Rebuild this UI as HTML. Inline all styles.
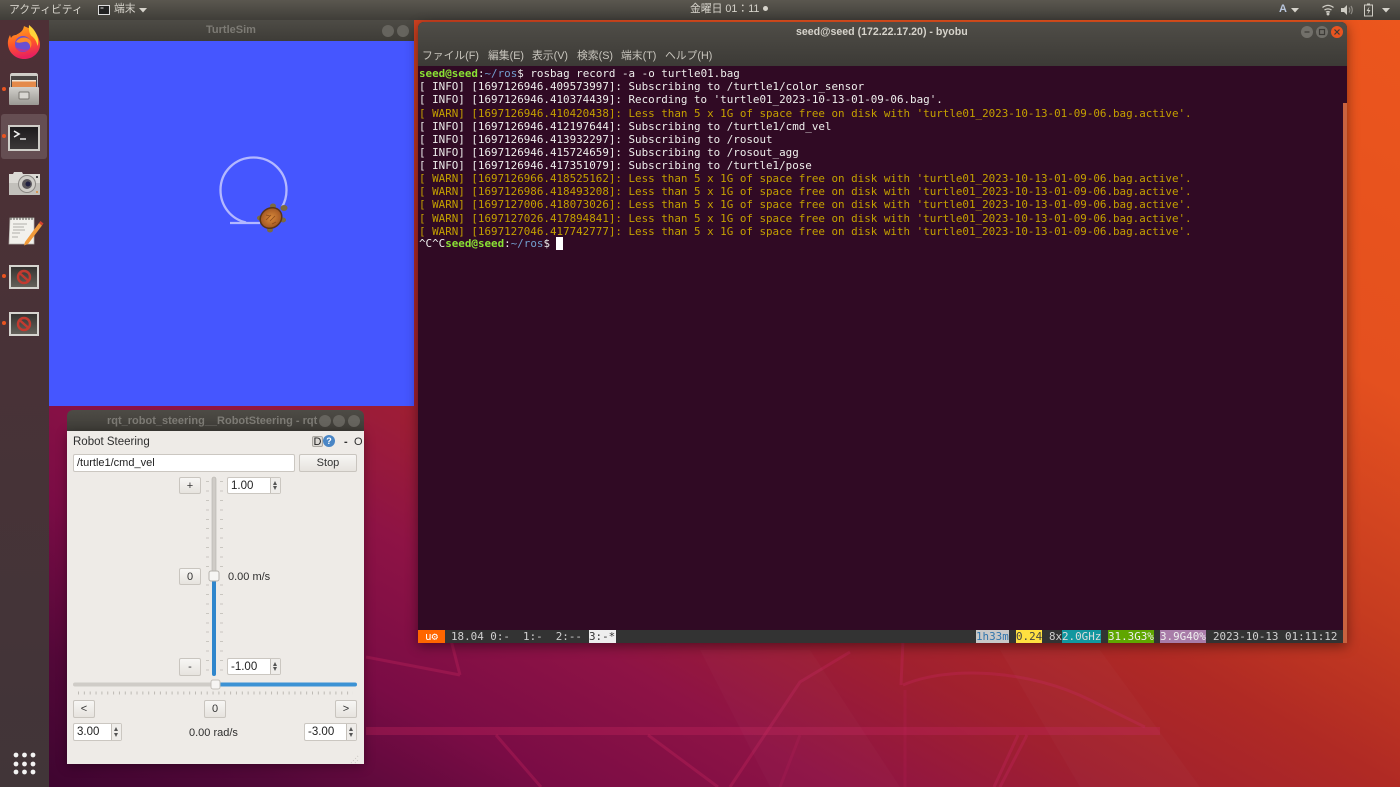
<!DOCTYPE html>
<html lang="ja"><head><meta charset="utf-8"><title>Ubuntu desktop</title>
<style>
*{box-sizing:border-box}
html,body{margin:0;padding:0;width:1400px;height:787px;overflow:hidden;background:#300a24}
body{font-family:"Liberation Sans","Noto Sans CJK JP",sans-serif}
#root{position:absolute;left:0;top:0;width:1400px;height:787px;overflow:hidden;filter:blur(.3px)}
.a{position:absolute}
.t{position:absolute;white-space:pre;line-height:1}
#bg{position:absolute;left:0;top:0;width:1400px;height:787px;background:linear-gradient(to top right,#3a042e 0%,#520838 10%,#7a0c45 20%,#8e1345 30%,#a0202f 40%,#b02a24 50%,#c63c20 60%,#e4501f 75%,#ec561d 100%)}
#top{position:absolute;left:0;top:0;width:1400px;height:20px;background:linear-gradient(#5a574f,#3f3d38);color:#d6d3cb;font-size:11px}
#dock{position:absolute;left:0;top:20px;width:49px;height:767px;background:linear-gradient(#4e3036,#413538)}
.dot{position:absolute;left:2px;width:4px;height:4px;border-radius:50%;background:#e95420}
.tb{background:linear-gradient(#4d4b45,#3e3c37)}
.wb{position:absolute;border-radius:50%;width:12px;height:12px;background:#66645e}
pre{margin:0;font-family:"DejaVu Sans Mono","Liberation Mono",monospace}
#term{position:absolute;left:419px;top:67px;font-size:10.88px;line-height:13.08px;color:#eeeeec;white-space:pre}
#term i{font-style:normal;position:relative;top:1px}
.w{color:#c4a000}.g{color:#8ae234;font-weight:bold}.b{color:#729fcf}
.st{position:absolute;top:630px;height:13px;font:10.88px/13px "DejaVu Sans Mono","Liberation Mono",monospace;white-space:pre}
.btn{position:absolute;background:linear-gradient(#f7f6f4,#e6e3de);border:1px solid #c9c5bf;border-radius:2px;color:#333;font-size:11px;text-align:center;line-height:16px}
.inp{position:absolute;background:#fff;border:1px solid #cbc7c1;border-radius:2px;color:#222;font-size:11.5px;line-height:16px;padding-left:3px}
.sp{position:absolute;top:0;right:0;bottom:0;width:10px;background:#efedea;border-left:1px solid #c4c0ba}
.sp:before{content:"";position:absolute;left:2px;top:3px;border:2.5px solid transparent;border-top:0;border-bottom:4px solid #555}
.sp:after{content:"";position:absolute;left:2px;bottom:3px;border:2.5px solid transparent;border-bottom:0;border-top:4px solid #555}
.lb{position:absolute;color:#2e2e2e;font-size:11px;white-space:pre;line-height:12px}
.mn{position:absolute;white-space:pre;line-height:1;top:51px;font-size:10.8px;color:#c8c5bd}
</style></head><body><div id="root">
<div id="bg"></div>
<svg class="a" style="left:0;top:0" width="1400" height="787" fill="none">
<g stroke="#c4245c" stroke-opacity=".35" stroke-width="3">
<path d="M903 640l-2 45M903 685C950 665 1030 670 1090 700L1145 727"/>
<path d="M451 640l9 35M366 657l94 18"/>
<path d="M496 735l45 52M648 735l70 52M1018 735l-24 52M1027 735L1000 787M730 787l70-105 50-30"/>
<path d="M800 735l-20 52M905 690l0 97" stroke-opacity=".18"/>
</g>
<path d="M366 727H1160V735H366Z" fill="#c4245c" fill-opacity=".35"/>
<path d="M370 410l30 0 0 60-30 0Z" fill="#a01a45" fill-opacity=".25"/>
<path d="M700 650L770 787H900L810 650ZM1000 650L1080 787H1200L1100 650Z" fill="#fff" fill-opacity=".02"/>
</svg>

<!-- top bar -->
<div id="top">
<div class="t" style="left:9px;top:5px;font-size:10.8px">アクティビティ</div>
<svg class="a" style="left:98px;top:5px" width="12" height="10"><rect x=".5" y=".5" width="11" height="9" fill="#222" stroke="#ddd"/><path d="M2.5 3h3" stroke="#ddd"/></svg>
<div class="t" style="left:114px;top:4px;font-size:10.8px">端末</div>
<svg class="a" style="left:139px;top:8px" width="8" height="5"><path d="M0 0h8L4 4.500Z" fill="#d6d3cb"/></svg>
<div class="t" style="left:690px;top:4px;font-size:10.8px">金曜日 01：11</div>
<div class="a" style="left:763px;top:6px;width:5px;height:5px;border-radius:50%;background:#d6d3cb"></div>
<div class="t" style="left:1279px;top:4px;font-size:11px;font-weight:bold;color:#b9c6dd">A</div>
<svg class="a" style="left:1291px;top:8px" width="8" height="5"><path d="M0 0h8L4 4.500Z" fill="#d6d3cb"/></svg>
<svg class="a" style="left:1322px;top:4px" width="12" height="12" fill="none" stroke="#cfccc4" stroke-width="1.300"><path d="M.5 3.500C4 .8 8 .8 11.500 3.500M2.500 6C4.500 4.500 7.500 4.500 9.500 6M4 8.200C5.200 7.400 6.800 7.400 8 8.200"/><circle cx="6" cy="10" r=".8" fill="#cfccc4"/></svg>
<svg class="a" style="left:1341px;top:4px" width="13" height="12" fill="none"><path d="M0 4h3l3-3v10L3 8H0Z" fill="#cfccc4"/><path d="M8 3.500C9 5 9 7 8 8.500M10 2c1.600 2.500 1.600 5.500 0 8" stroke="#8f8c85" stroke-width="1.200"/></svg>
<svg class="a" style="left:1364px;top:3px" width="10" height="14" fill="none"><rect x=".5" y="2" width="8" height="11" stroke="#cfccc4"/><rect x="3" y=".5" width="3" height="1.500" fill="#cfccc4"/><path d="M5.500 3.500L2.500 8h2l-1 3.500L6.500 7h-2Z" fill="#cfccc4"/></svg>
<svg class="a" style="left:1382px;top:8px" width="8" height="5"><path d="M0 0h8L4 4.500Z" fill="#d6d3cb"/></svg>
</div>

<!-- dock -->
<div id="dock"></div>
<div class="a" style="left:1px;top:114px;width:46px;height:45px;border-radius:3px;background:rgba(255,255,255,.14)"></div>
<div class="dot" style="top:87px"></div><div class="dot" style="top:134px"></div>
<div class="dot" style="top:274px"></div><div class="dot" style="top:321px"></div>
<svg class="a" style="left:0;top:20px" width="49" height="767">
<defs>
<linearGradient id="ff" x1="0" y1="0" x2=".2" y2="1"><stop offset="0" stop-color="#ffb01f"/><stop offset=".55" stop-color="#ff5a26"/><stop offset="1" stop-color="#e8205f"/></linearGradient>
<linearGradient id="sil" x1="0" y1="0" x2="0" y2="1"><stop offset="0" stop-color="#d2d0cb"/><stop offset="1" stop-color="#9a9893"/></linearGradient>
<linearGradient id="dk" x1="0" y1="0" x2="0" y2="1"><stop offset="0" stop-color="#1d1b1d"/><stop offset="1" stop-color="#3c3839"/></linearGradient>
<linearGradient id="no" x1="0" y1="0" x2="0" y2="1"><stop offset="0" stop-color="#353331"/><stop offset="1" stop-color="#636059"/></linearGradient>
<radialGradient id="shell"><stop offset="0" stop-color="#d98a3a"/><stop offset="1" stop-color="#a65a24"/></radialGradient>
</defs>
<!-- firefox -->
<path d="M24 6c3 2 9 2 13 9 4 7 4 13 0 18-4 5-9 6-13 6-7 0-15-5-16-14-.5-4 .5-7 2-10l1 3c1-2 3-3 5-3 3-2 7-3 8-9Z" fill="url(#ff)"/>
<path d="M29 5c4 3 8 8 9 14 .5 3 .2 5-.5 7-1-5-3-8-6-10-2-2-3-6-2.500-11Z" fill="#ffd53a"/>
<circle cx="23" cy="24" r="8" fill="#6a4fd0"/>
<path d="M16 22c3-5 10-6 14-2 2 2 2 6 0 8 .5-3-1-5-3-6-3-1-7 2-11 0Z" fill="#ff8a2a"/>
<path d="M15 27c3 5 10 6 15 2-3 1-8 1-15-2Z" fill="#b8359a"/>
<!-- files -->
<path d="M10 55c0-1 1-2 2-2h24c1 0 2 1 2 2v29c0 1-1 1-2 1H12c-1 0-2 0-2-1Z" fill="url(#sil)"/>
<rect x="11" y="56" width="26" height="11" fill="#4a4644"/>
<rect x="12" y="61" width="24" height="6" fill="#e48a4a"/><rect x="12" y="60" width="24" height="1.500" fill="#f2e7d6"/>
<rect x="9" y="67" width="30" height="18" rx="1" fill="url(#sil)"/>
<rect x="19" y="72" width="10" height="7" rx="1" fill="#d9d7d2" stroke="#77746f"/>
<!-- terminal -->
<rect x="8" y="105" width="32" height="26" fill="#cfcdc8"/><rect x="10" y="107" width="28" height="22" fill="url(#dk)"/>
<path d="M14 111l5 3-5 3" fill="none" stroke="#f2f2f2" stroke-width="1.600"/><path d="M20 119h6" stroke="#f2f2f2" stroke-width="1.400"/>
<!-- camera -->
<path d="M9 154h4l1-2h8l1 2h17v20a1 1 0 0 1-1 1H9Z" fill="#dbd9d4"/>
<path d="M9 163h31v11a1 1 0 0 1-1 1H9Z" fill="#c2c0bb"/>
<circle cx="27" cy="164" r="8.500" fill="#cfcdc8" stroke="#8a8783"/><circle cx="27" cy="164" r="5" fill="#5a575c"/><circle cx="28" cy="164" r="2.500" fill="#1f2040"/>
<circle cx="37" cy="172" r="1" fill="#e08a30"/><rect x="36" y="156" width="2" height="2" fill="#444"/>
<!-- note -->
<path d="M10 198h24v26H9Z" fill="#f2f1ec" stroke="#b8b6b0" stroke-width=".7"/>
<path d="M11 197v3M14 197v3M17 197v3M20 197v3M23 197v3M26 197v3M29 197v3M32 197v3" stroke="#55534f"/>
<path d="M13 204h14M13 207h11M13 210h12M12 213h8M12 217h6" stroke="#9a9894" stroke-width=".8"/>
<path d="M25 222L39 203l3 2.500L28 224l-4 1.500Z" fill="#f09a3a"/><path d="M39 203l1.500-2 3 2.500-1.500 2Z" fill="#d5402f"/>
<!-- disabled -->
<rect x="9" y="245" width="30" height="24" fill="#d6d4cf"/><rect x="11" y="247" width="26" height="20" fill="url(#no)"/>
<circle cx="24" cy="257" r="6" fill="none" stroke="#c23a30" stroke-width="2.400"/><path d="M19.500 253l9 8" stroke="#c23a30" stroke-width="2.400"/>
<rect x="9" y="292" width="30" height="24" fill="#d6d4cf"/><rect x="11" y="294" width="26" height="20" fill="url(#no)"/>
<circle cx="24" cy="304" r="6" fill="none" stroke="#c23a30" stroke-width="2.400"/><path d="M19.500 300l9 8" stroke="#c23a30" stroke-width="2.400"/>
<!-- grid -->
<g fill="#f3f3f3"><circle cx="16" cy="735" r="2.400"/><circle cx="24.500" cy="735" r="2.400"/><circle cx="33" cy="735" r="2.400"/><circle cx="16" cy="744" r="2.400"/><circle cx="24.500" cy="744" r="2.400"/><circle cx="33" cy="744" r="2.400"/><circle cx="16" cy="752" r="2.400"/><circle cx="24.500" cy="752" r="2.400"/><circle cx="33" cy="752" r="2.400"/></g>
</svg>

<!-- turtlesim -->
<div class="a tb" style="left:49px;top:20px;width:365px;height:21px"></div>
<div class="t" style="left:206px;top:25px;font-size:11px;font-weight:bold;color:#7d7b75">TurtleSim</div>
<div class="wb" style="left:382px;top:25px"></div><div class="wb" style="left:397px;top:25px"></div>
<div class="a" style="left:49px;top:41px;width:365px;height:365px;background:#4556ff"></div>
<svg class="a" style="left:200px;top:140px" width="100" height="100" fill="none">
<path d="M30 83H60M46 82.500C31 79 20.500 66 20.500 50C20.500 32 35 17.500 53.500 17.500C72 17.500 86.500 32 86.500 50C86.500 57 85 62 82 67" stroke="#b3b8ff" stroke-width="2.300"/>
<g fill="#7c6a3e"><ellipse cx="84" cy="68" rx="3.500" ry="3"/><ellipse cx="73" cy="66" rx="3" ry="2.500"/><ellipse cx="60" cy="78" rx="3" ry="2.500"/><ellipse cx="83" cy="80" rx="3" ry="2.500"/><ellipse cx="70" cy="90" rx="3" ry="2.500"/></g>
<ellipse cx="71" cy="78" rx="12" ry="10.500" fill="#5a3416" transform="rotate(-35 71 78)"/>
<ellipse cx="71" cy="78" rx="10.500" ry="9" fill="url(#shell)" transform="rotate(-35 71 78)"/>
<path d="M66 80l5-5M70 81l5-5M66 75l4 1M72 84l4-2" stroke="#8a4a1c" stroke-width=".8"/>
</svg>

<!-- rqt -->
<div class="a tb" style="left:67px;top:410px;width:297px;height:21px;border-radius:6px 6px 0 0"></div>
<div class="t" style="left:107px;top:415px;font-size:11px;font-weight:bold;color:#7d7b75;width:212px;overflow:hidden;padding-top:1px">rqt_robot_steering__RobotSteering - rqt</div>
<div class="wb" style="left:319px;top:415px"></div><div class="wb" style="left:333px;top:415px"></div><div class="wb" style="left:348px;top:415px"></div>
<div class="a" style="left:67px;top:431px;width:297px;height:333px;background:#eeebe7;box-shadow:0 2px 10px rgba(0,0,0,.35)"></div>
<div class="lb" style="left:73px;top:436px;font-size:11.500px">Robot Steering</div>
<div class="a" style="left:312px;top:436px;width:11px;height:11px;background:#dcd9d4;border:1px solid #aaa7a1;border-radius:2px;font-size:11px;line-height:10px;text-align:center;color:#222">D</div>
<div class="a" style="left:323px;top:435px;width:12px;height:12px;border-radius:50%;background:#4a86c5;color:#fff;font-size:9px;line-height:12px;text-align:center;font-weight:bold">?</div>
<div class="lb" style="left:344px;top:436px;font-weight:bold">-</div>
<div class="lb" style="left:354px;top:436px">O</div>
<div class="inp" style="left:73px;top:454px;width:222px;height:18px;font-size:11px">/turtle1/cmd_vel</div>
<div class="btn" style="left:299px;top:454px;width:58px;height:18px">Stop</div>

<div class="btn" style="left:179px;top:477px;width:22px;height:17px">+</div>
<div class="btn" style="left:179px;top:568px;width:22px;height:17px">0</div>
<div class="btn" style="left:179px;top:658px;width:22px;height:18px">-</div>
<div class="inp" style="left:227px;top:477px;width:54px;height:17px">1.00<div class="sp"></div></div>
<div class="inp" style="left:227px;top:658px;width:54px;height:17px">-1.00<div class="sp"></div></div>
<div class="lb" style="left:228px;top:571px">0.00 m/s</div>

<svg class="a" style="left:67px;top:470px" width="297" height="294" fill="none">
<path stroke="#c9c6c0" d="M139 11.500h3M153 11.500h3M139 21h3M153 21h3M139 30.500h3M153 30.500h3M139 40h3M153 40h3M139 49.500h3M153 49.500h3M139 58.500h3M153 58.500h3M139 68h3M153 68h3M139 77.500h3M153 77.500h3M139 87h3M153 87h3M139 96.500h3M153 96.500h3M139 115h3M153 115h3M139 124.500h3M153 124.500h3M139 134h3M153 134h3M139 143.500h3M153 143.500h3M139 153h3M153 153h3M139 162h3M153 162h3M139 171.500h3M153 171.500h3M139 181h3M153 181h3M139 190.500h3M153 190.500h3M139 200h3M153 200h3"/>
<rect x="145" y="7" width="4" height="100" rx="2" fill="#cfccc7" stroke="#b5b2ac" stroke-width=".6"/>
<rect x="145" y="106" width="4" height="100" rx="2" fill="#2f86cc"/>
<rect x="6" y="212.500" width="142" height="4" rx="2" fill="#cfccc7"/>
<rect x="148" y="212.500" width="142" height="4" rx="2" fill="#3c92d4"/>
<rect x="142" y="101" width="10" height="10" rx="2" fill="#f6f5f3" stroke="#b5b2ac"/>
<rect x="144" y="210" width="9" height="9" rx="2" fill="#f6f5f3" stroke="#c4c1bb"/>
<line x1="11" y1="223" x2="286" y2="223" stroke="#bdbab4" stroke-width="3" stroke-dasharray="1 4.850"/>
<path d="M284 293l8-8M288 293l4-4" stroke="#c9c6c0" stroke-dasharray="1 2"/>
</svg>

<div class="btn" style="left:73px;top:700px;width:22px;height:18px">&lt;</div>
<div class="btn" style="left:204px;top:700px;width:22px;height:18px">0</div>
<div class="btn" style="left:335px;top:700px;width:22px;height:18px">&gt;</div>
<div class="inp" style="left:73px;top:723px;width:49px;height:18px">3.00<div class="sp"></div></div>
<div class="inp" style="left:304px;top:723px;width:53px;height:18px">-3.00<div class="sp"></div></div>
<div class="lb" style="left:189px;top:727px">0.00 rad/s</div>

<!-- terminal window -->
<div class="a" style="left:418px;top:22px;width:929px;height:621px;background:#300a24;border-radius:6px 6px 0 0;box-shadow:0 3px 12px rgba(0,0,0,.45)"></div>
<div class="a tb" style="left:418px;top:22px;width:929px;height:44px;border-radius:6px 6px 0 0;background:linear-gradient(#4f4d47,#3c3a36)"></div>
<div class="t" style="left:796px;top:27px;font-size:10.6px;font-weight:bold;color:#d6d3cb">seed@seed (172.22.17.20) - byobu</div>
<div class="wb" style="left:1301px;top:26px;background:#72706a"></div>
<div class="wb" style="left:1316px;top:26px;background:#72706a"></div>
<div class="wb" style="left:1331px;top:26px;background:#e95420"></div>
<svg class="a" style="left:1301px;top:26px" width="42" height="12" fill="none" stroke="#3c3a36" stroke-width="1.200"><path d="M3.500 6h5"/><rect x="18.500" y="3.500" width="5" height="5"/><path d="M33.500 3.500l5 5M38.500 3.500l-5 5"/></svg>
<div class="mn" style="left:422px">ファイル(F)</div>
<div class="mn" style="left:488px">編集(E)</div>
<div class="mn" style="left:532px">表示(V)</div>
<div class="mn" style="left:577px">検索(S)</div>
<div class="mn" style="left:621px">端末(T)</div>
<div class="mn" style="left:665px">ヘルプ(H)</div>
<div class="a" style="left:1343px;top:103px;width:4px;height:540px;background:#c8623f"></div>
<pre id="term"><span class="g">seed@seed</span>:<span class="b">~/ros</span>$ rosbag record -a -o turtle01.bag
[ INFO] [1697126946.409573997]: Subscribing to /turtle1/color_sensor
[ INFO] [1697126946.410374439]: Recording to 'turtle01_2023-10-13-01-09-06.bag'.
<i class="w">[ WARN] [1697126946.410420438]: Less than 5 x 1G of space free on disk with 'turtle01_2023-10-13-01-09-06.bag.active'.</i>
<i>[ INFO] [1697126946.412197644]: Subscribing to /turtle1/cmd_vel</i>
<i>[ INFO] [1697126946.413932297]: Subscribing to /rosout</i>
<i>[ INFO] [1697126946.415724659]: Subscribing to /rosout_agg</i>
[ INFO] [1697126946.417351079]: Subscribing to /turtle1/pose
<span class="w">[ WARN] [1697126966.418525162]: Less than 5 x 1G of space free on disk with 'turtle01_2023-10-13-01-09-06.bag.active'.
[ WARN] [1697126986.418493208]: Less than 5 x 1G of space free on disk with 'turtle01_2023-10-13-01-09-06.bag.active'.
[ WARN] [1697127006.418073026]: Less than 5 x 1G of space free on disk with 'turtle01_2023-10-13-01-09-06.bag.active'.
<i>[ WARN] [1697127026.417894841]: Less than 5 x 1G of space free on disk with 'turtle01_2023-10-13-01-09-06.bag.active'.</i>
<i>[ WARN] [1697127046.417742777]: Less than 5 x 1G of space free on disk with 'turtle01_2023-10-13-01-09-06.bag.active'.</i></span>
^C^C<span class="g">seed@seed</span>:<span class="b">~/ros</span>$ </pre>
<div class="a" style="left:556px;top:237px;width:7px;height:13px;background:#fff"></div>
<!-- status -->
<div class="a" style="left:418px;top:630px;width:925px;height:13px;background:#333"></div>
<div class="st" style="left:418px;width:27px;background:#f60;color:#fff;padding-left:7px">u⚙</div>
<div class="st" style="left:451px;color:#d0d0d0">18.04 0:-  1:-  2:--</div>
<div class="st" style="left:589px;width:27px;background:#eee;color:#333">3:-*</div>
<div class="st" style="left:976px;width:33px;background:#c8c8c8;color:#2f74ac">1h33m</div>
<div class="st" style="left:1016px;width:26px;background:#ffe040;color:#444">0.24</div>
<div class="st" style="left:1049px;color:#d0d0d0">8x</div>
<div class="st" style="left:1062px;width:39px;background:#12979f;color:#ddd">2.0GHz</div>
<div class="st" style="left:1108px;width:46px;background:#5fa600;color:#eee">31.3G3%</div>
<div class="st" style="left:1160px;width:46px;background:#a87ca8;color:#eee">3.9G40%</div>
<div class="st" style="left:1213px;color:#d0d0d0">2023-10-13 01:11:12</div>
</div></body></html>
